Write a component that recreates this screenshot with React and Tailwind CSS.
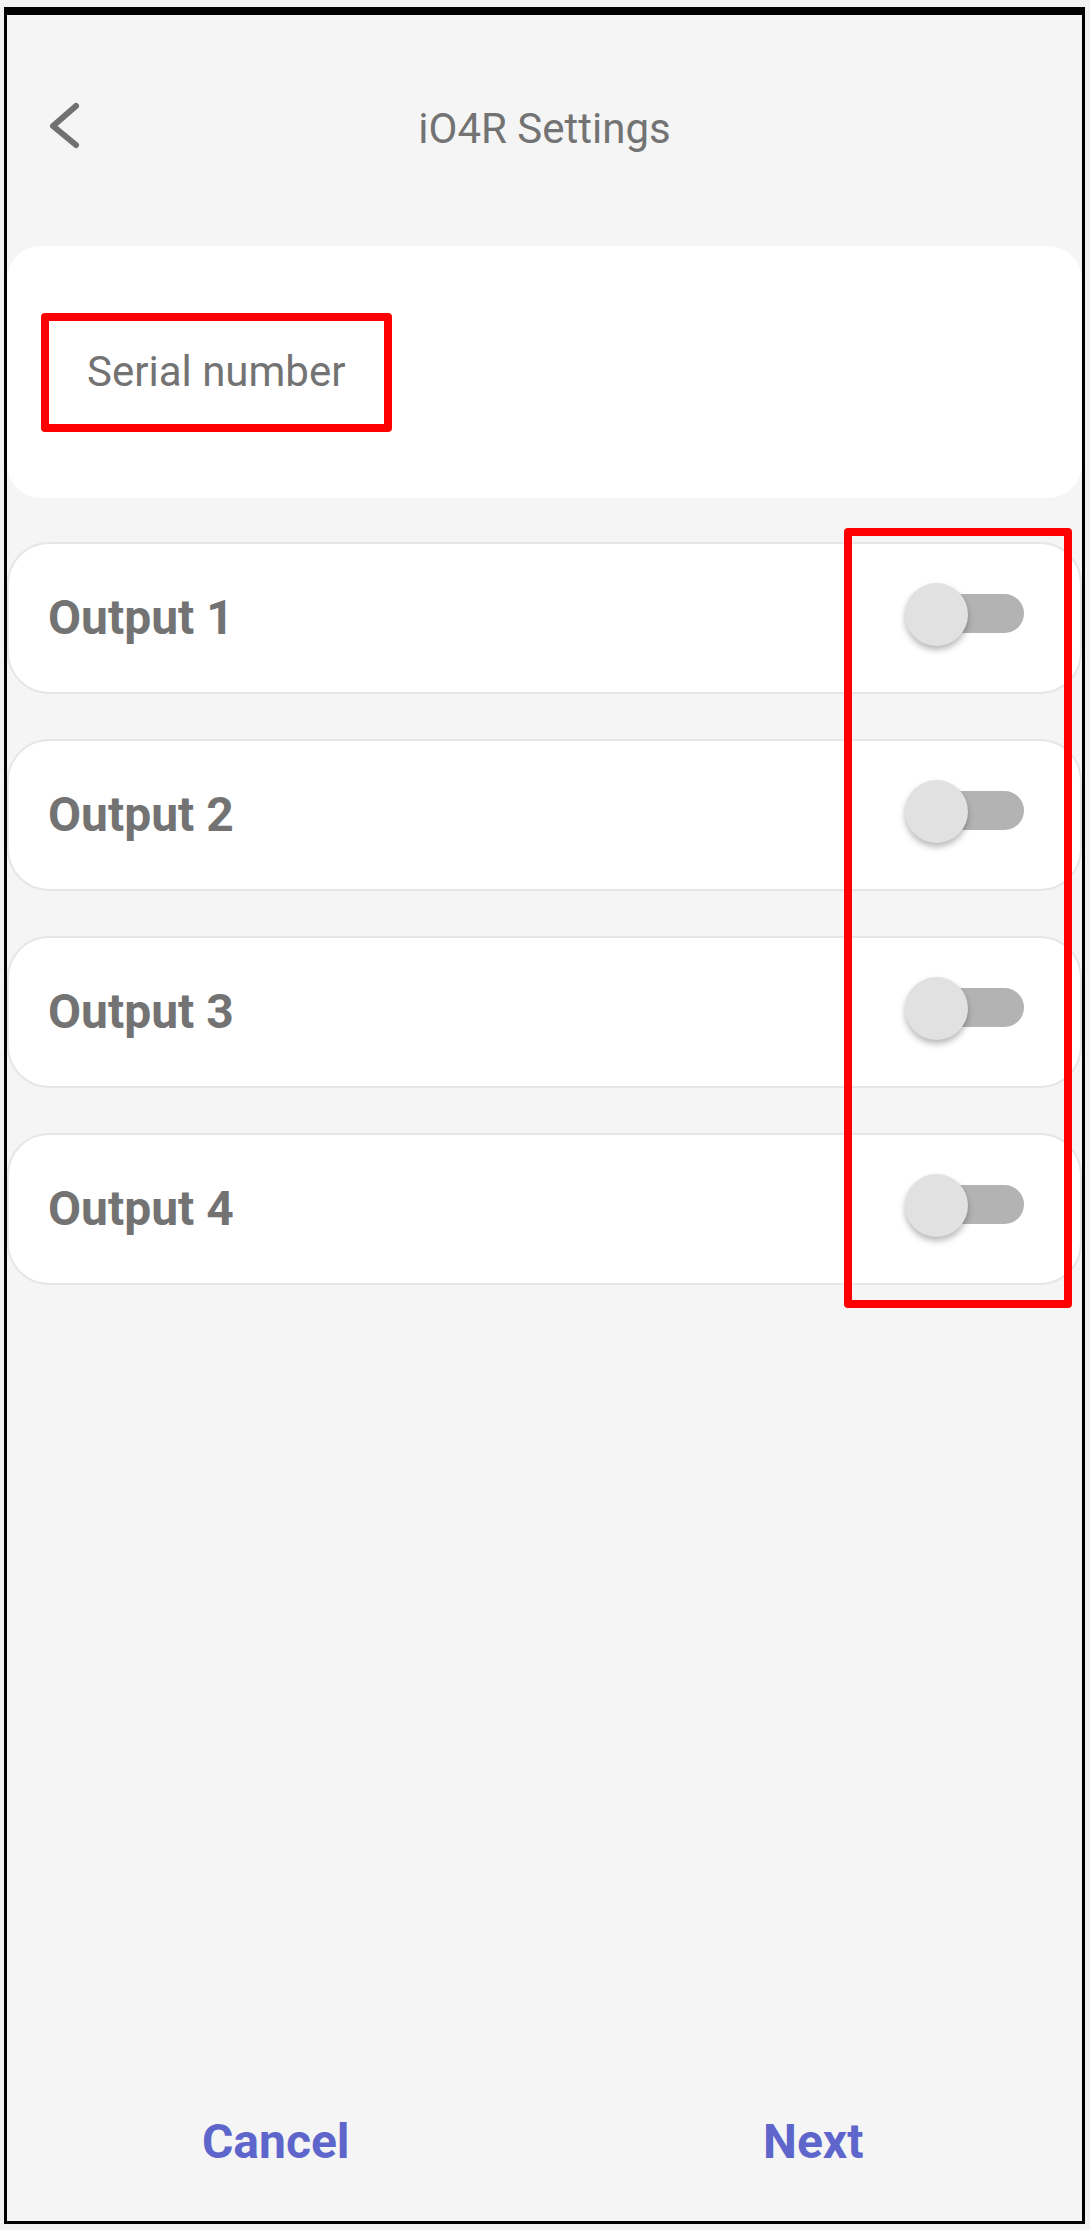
import React from "react";

const outputs = ["Output 1", "Output 2", "Output 3", "Output 4"];

const Toggle = () => (
  <div className="relative w-[119px] h-[63px] mb-[8px]">
    <div className="absolute right-0 top-[11px] h-[39px] w-[100px] rounded-full bg-[#b3b3b3]" />
    <div className="absolute left-0 top-0 h-[63px] w-[63px] rounded-full bg-[#e1e1e1] shadow-[0_4px_6px_rgba(0,0,0,0.28)]" />
  </div>
);

const App = () => {
  return (
    <div
      className="w-[1090px] h-[2230px] bg-[#f2f2f2] pt-[7px] pl-[4px] pr-[5px] pb-[6px]"
      style={{ fontFamily: "Roboto, 'Noto Sans', sans-serif" }}
    >
      <div className="h-full flex flex-col bg-[#f5f5f5] border-black border-t-[8px] border-l-[3px] border-r-[3px] border-b-[3px]">
        {/* header */}
        <div className="h-[231px] pb-[3px] flex items-center">
          <div className="w-[78px] pl-[38px] flex items-center">
            <svg width="40" height="56" viewBox="0 0 40 56" fill="none">
              <path
                d="M31 5 L8 25 L31 44"
                stroke="#717171"
                strokeWidth="6"
                strokeLinecap="round"
                strokeLinejoin="round"
              />
            </svg>
          </div>
          <div className="flex-1 text-center text-[42px] leading-none text-[#737373]">
            iO4R Settings
          </div>
          <div className="w-[78px]" />
        </div>

        {/* serial number card */}
        <div className="h-[252px] bg-white rounded-[34px] flex items-center pl-[34px]">
          <div className="w-[351px] h-[119px] border-[8px] border-[#ff0000] rounded-[4px] flex items-center pl-[38px]">
            <span className="text-[42px] leading-none text-[#737373]">
              Serial number
            </span>
          </div>
        </div>

        {/* outputs */}
        <div className="relative mt-[44px] flex flex-col gap-[45px]">
          {outputs.map((name) => (
            <div
              key={name}
              className="h-[152px] bg-white rounded-[42px] border-2 border-[#e6e6e6] flex items-center justify-between pl-[39px] pr-[56px]"
            >
              <span className="text-[48px] leading-none font-bold text-[#737373]">
                {name}
              </span>
              <Toggle />
            </div>
          ))}
          <div className="absolute left-[837px] top-[-14px] w-[228px] h-[780px] border-[8px] border-[#ff0000] rounded-[4px] pointer-events-none" />
        </div>

        <div className="flex-1" />

        {/* footer buttons */}
        <div className="h-[153px] pb-[6px] flex items-center">
          <div className="flex-1 text-center text-[48px] leading-none font-bold text-[#5e66cc]">
            Cancel
          </div>
          <div className="flex-1 text-center text-[48px] leading-none font-bold text-[#5e66cc]">
            Next
          </div>
        </div>
      </div>
    </div>
  );
};

export default App;
